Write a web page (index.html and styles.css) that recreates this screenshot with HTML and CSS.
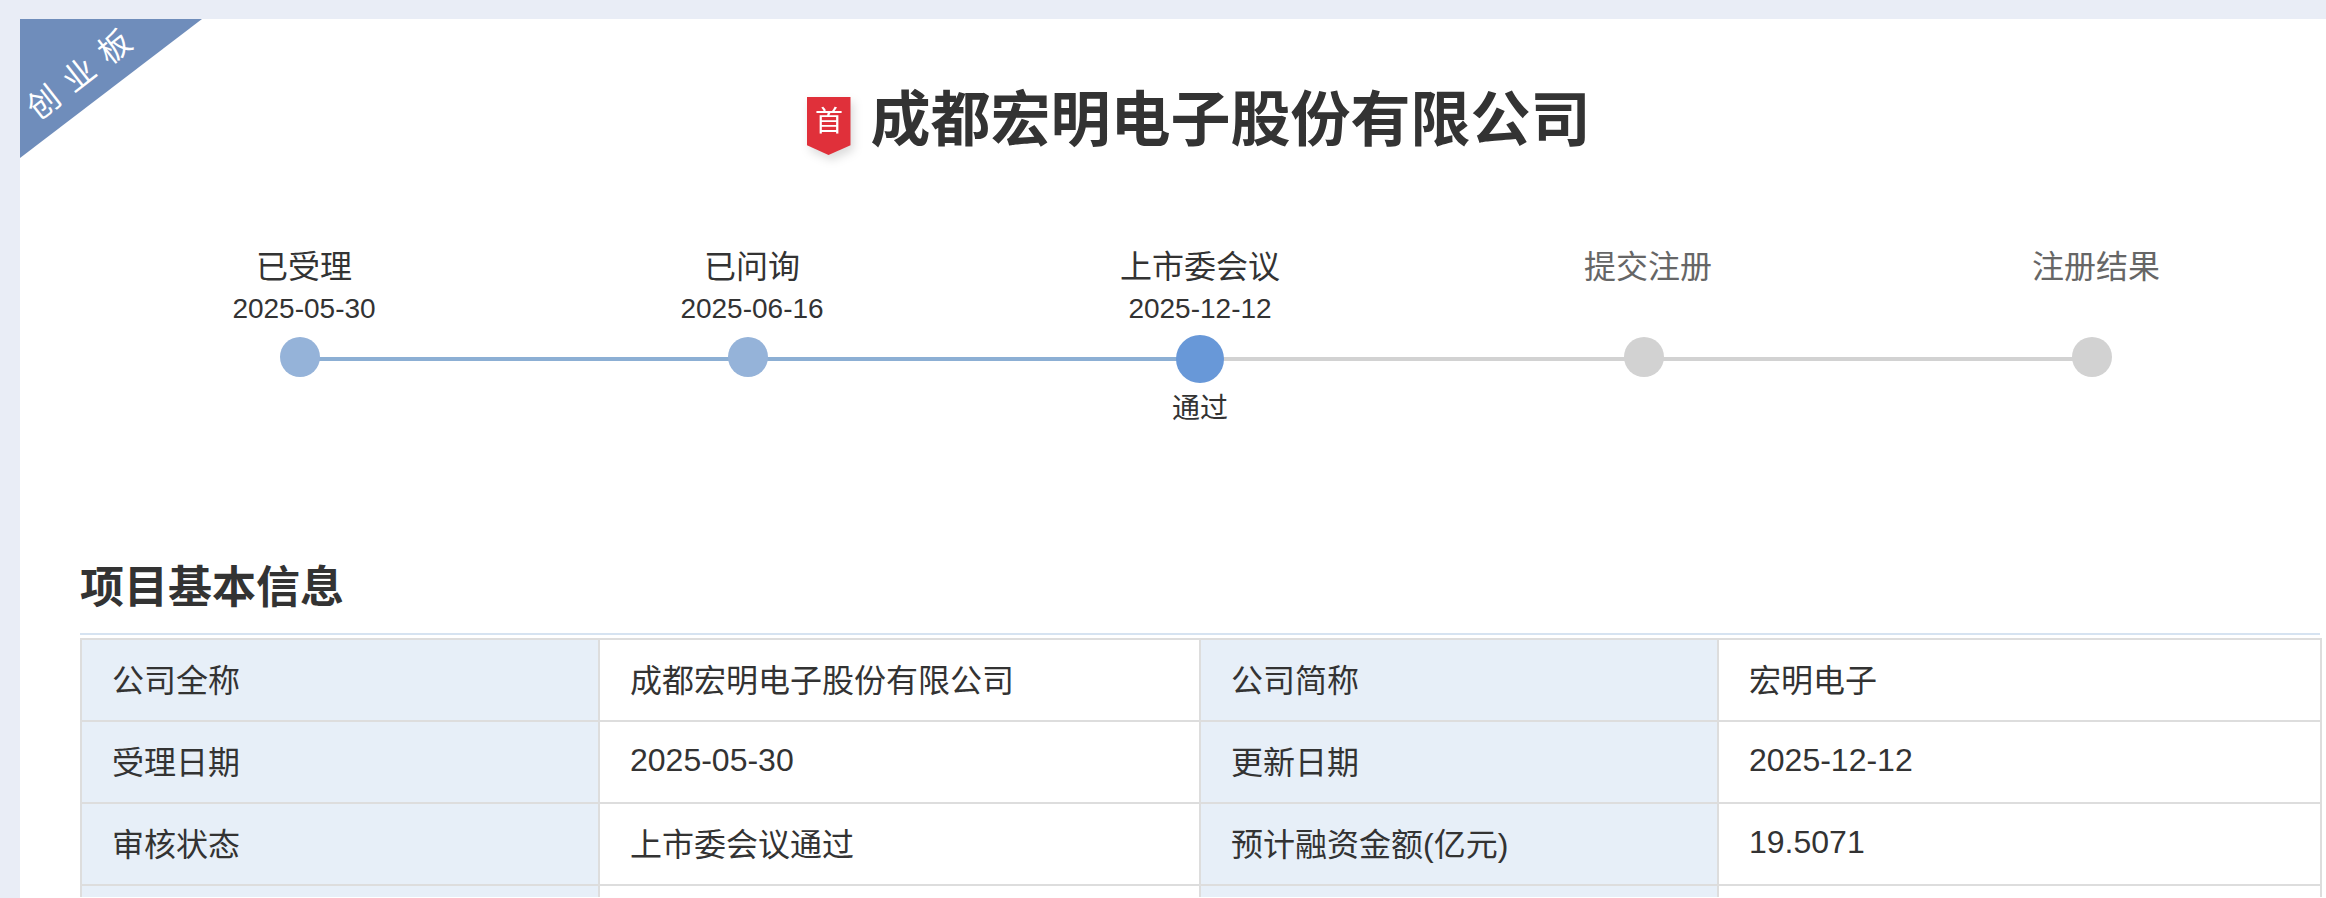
FILE: index.html
```html
<!DOCTYPE html>
<html lang="zh-CN">
<head>
<meta charset="utf-8">
<title>成都宏明电子股份有限公司</title>
<link rel="stylesheet" href="styles.css">
</head>
<body>
<main class="panel">
  <div class="ribbon"></div>
  <span class="ribbon-text">创业板</span>
  <header class="title-row">
    <div class="badge-wrap"><div class="badge">首</div></div>
    <h1 class="title">成都宏明电子股份有限公司</h1>
  </header>
  <ol class="steps">
    <li class="step done">
      <div class="step-name">已受理</div>
      <div class="step-date">2025-05-30</div>
      <div class="dot-wrap"><span class="dot"></span></div>
      <div class="step-note"></div>
    </li>
    <li class="step done">
      <div class="step-name">已问询</div>
      <div class="step-date">2025-06-16</div>
      <div class="dot-wrap"><span class="dot"></span></div>
      <div class="step-note"></div>
    </li>
    <li class="step current">
      <div class="step-name">上市委会议</div>
      <div class="step-date">2025-12-12</div>
      <div class="dot-wrap"><span class="dot"></span></div>
      <div class="step-note">通过</div>
    </li>
    <li class="step todo">
      <div class="step-name">提交注册</div>
      <div class="step-date"></div>
      <div class="dot-wrap"><span class="dot"></span></div>
      <div class="step-note"></div>
    </li>
    <li class="step todo last">
      <div class="step-name">注册结果</div>
      <div class="step-date"></div>
      <div class="dot-wrap"><span class="dot"></span></div>
      <div class="step-note"></div>
    </li>
  </ol>
  <h2 class="section-title">项目基本信息</h2>
  <table class="info">
    <colgroup>
      <col class="col-label-a"><col class="col-value-a"><col class="col-label-b"><col class="col-value-b">
    </colgroup>
    <tbody>
      <tr><th>公司全称</th><td>成都宏明电子股份有限公司</td><th>公司简称</th><td>宏明电子</td></tr>
      <tr><th>受理日期</th><td>2025-05-30</td><th>更新日期</th><td>2025-12-12</td></tr>
      <tr><th>审核状态</th><td>上市委会议通过</td><th>预计融资金额(亿元)</th><td>19.5071</td></tr>
      <tr class="row-end"><th></th><td></td><th></th><td></td></tr>
    </tbody>
  </table>
</main>
</body>
</html>
```

FILE: styles.css
```css
* { box-sizing: border-box; }
html, body { height: 898px; overflow: hidden; }
body {
  margin: 0;
  padding: 19px 0 0 20px;
  background: #e9edf6;
  color: #333;
  font-family: "Liberation Sans", "Noto Sans CJK SC", sans-serif;
}
.panel {
  position: relative;
  height: 879px;
  background: #fff;
  padding: 72px 6px 0 60px;
}
.ribbon {
  position: absolute;
  left: 0;
  top: 0;
  width: 0;
  height: 0;
  border-top: 139px solid #6f8dbb;
  border-right: 182px solid transparent;
}
.ribbon-text {
  position: absolute;
  left: -3px;
  top: 36px;
  width: 135px;
  color: #fff;
  font-size: 32px;
  line-height: 32px;
  letter-spacing: 13px;
  white-space: nowrap;
  transform: rotate(-38deg);
}
.title-row {
  display: flex;
  justify-content: center;
  gap: 20px;
  height: 60px;
  padding-right: 3px;
}
.badge-wrap {
  margin-top: 6px;
  height: 58px;
  filter: drop-shadow(3px 5px 5px rgba(0, 0, 0, .14));
}
.badge {
  width: 44px;
  height: 58px;
  padding-top: 8px;
  padding-left: 1px;
  background: #e0303a;
  color: #fff;
  font-size: 28px;
  line-height: 34px;
  text-align: center;
  clip-path: polygon(0 0, 100% 0, 100% 83%, 50% 100%, 0 83%);
}
.title {
  margin: 0;
  font-size: 60px;
  line-height: 60px;
  font-weight: 700;
  white-space: nowrap;
}
.steps {
  display: grid;
  grid-template-columns: repeat(5, 1fr);
  margin: 94px 0 0;
  padding: 0;
  list-style: none;
}
.step {
  display: flex;
  flex-direction: column;
  align-items: center;
  text-align: center;
}
.step-name { height: 44px; font-size: 32px; line-height: 44px; }
.step-date { height: 40px; font-size: 28px; line-height: 40px; }
.step-note { height: 40px; margin-top: 6px; font-size: 28px; line-height: 40px; }
.dot-wrap {
  position: relative;
  width: 48px;
  height: 48px;
  margin-top: 6px;
}
.dot-wrap::after {
  content: "";
  position: absolute;
  left: 24px;
  top: 22px;
  width: 448px;
  height: 4px;
  background: #d2d2d2;
}
.done .dot-wrap::after { background: #8cafd4; }
.last .dot-wrap::after { display: none; }
.dot {
  position: absolute;
  z-index: 1;
  left: 0;
  top: 2px;
  width: 40px;
  height: 40px;
  border-radius: 50%;
  background: #d2d2d2;
}
.done .dot { background: #95b3d9; }
.current .dot { top: 0; width: 48px; height: 48px; background: #6898d8; }
.todo { color: #666; }
.section-title {
  margin: 129px 0 0;
  padding-bottom: 15px;
  border-bottom: 2px solid #d6e3f1;
  font-size: 44px;
  line-height: 60px;
  font-weight: 700;
}
.info {
  width: 2240px;
  margin-top: 3px;
  border-collapse: collapse;
  table-layout: fixed;
  font-size: 32px;
}
.col-label-a { width: 518px; }
.col-value-a { width: 601px; }
.col-label-b { width: 518px; }
.col-value-b { width: 603px; }
.info tr { height: 82px; }
.info .row-end { height: 12px; }
.info th, .info td {
  border: 2px solid #ddd;
  padding: 0 30px 4px;
  font-weight: 400;
  text-align: left;
  white-space: nowrap;
}
.info .row-end th, .info .row-end td {
  padding: 0;
  border-bottom: 0;
}
.info th { background: #e7eff8; }
.info td { background: #fff; }
```
